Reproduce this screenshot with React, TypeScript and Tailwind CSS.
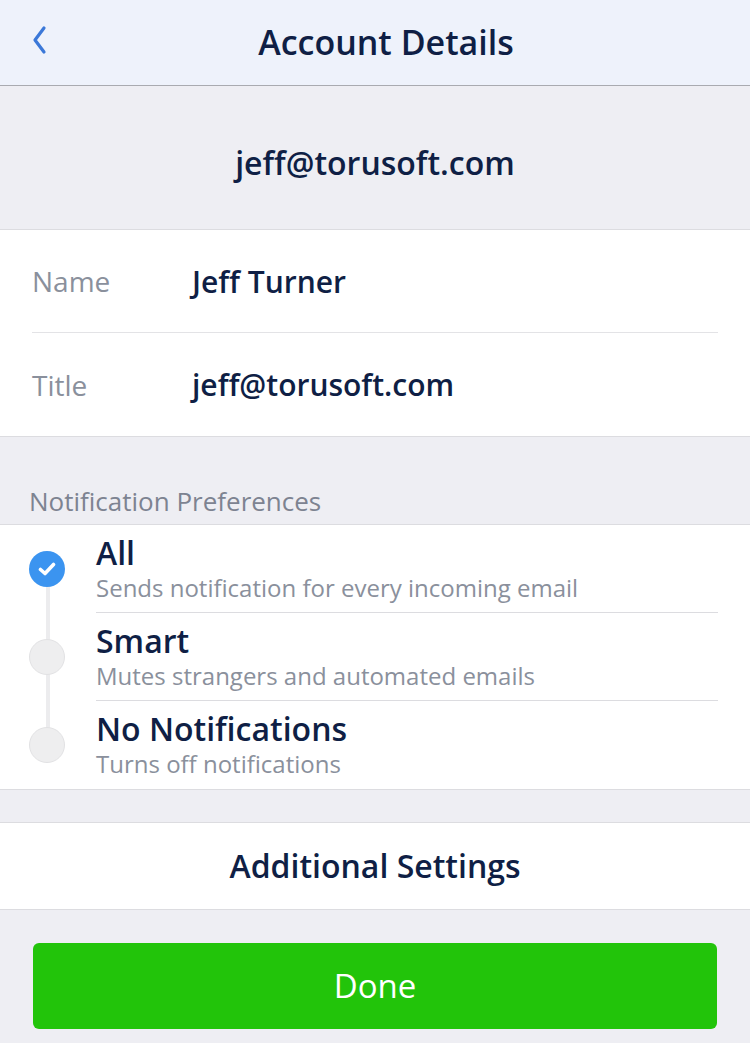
import React, { useState } from 'react';

type Pref = { id: string; title: string; desc: string };

const prefs: Pref[] = [
  { id: 'all', title: 'All', desc: 'Sends notification for every incoming email' },
  { id: 'smart', title: 'Smart', desc: 'Mutes strangers and automated emails' },
  { id: 'none', title: 'No Notifications', desc: 'Turns off notifications' },
];

const font = { fontFamily: '"Open Sans", "Noto Sans", sans-serif' };

export default function App() {
  const [selected, setSelected] = useState('all');

  return (
    <div className="w-[750px] h-[1043px] bg-[#eeeef3] text-[#0f1f45] overflow-hidden" style={font}>
      {/* Header */}
      <div className="relative h-[86px] bg-[#eef2fb] border-b border-[#a9aab0] flex items-center justify-center pl-[22px]">
        <button className="absolute left-[26px] top-[23px] text-[#3b78d8]">
          <svg width="28" height="34" viewBox="0 0 28 34" fill="none">
            <path d="M18 5 L9 17 L18 29" stroke="currentColor" strokeWidth="3.2" strokeLinecap="round" strokeLinejoin="round" />
          </svg>
        </button>
        <h1 className="text-[34px] font-semibold leading-none -mt-[2px]">Account Details</h1>
      </div>

      {/* Email */}
      <div className="h-[144px] flex items-center justify-center border-b border-[#dcdce0] pt-[10px]">
        <span className="text-[32px] font-semibold leading-none">jeff@torusoft.com</span>
      </div>

      {/* Name / Title */}
      <div className="bg-white border-b border-[#dcdce0]">
        <div className="h-[103px] mx-[32px] flex items-center border-b border-[#e3e3e6]">
          <span className="w-[160px] text-[28px] text-[#8a909c]">Name</span>
          <span className="text-[30px] font-semibold">Jeff Turner</span>
        </div>
        <div className="h-[103px] mx-[32px] flex items-center">
          <span className="w-[160px] text-[28px] text-[#8a909c]">Title</span>
          <span className="text-[30px] font-semibold">jeff@torusoft.com</span>
        </div>
      </div>

      {/* Notification Preferences */}
      <div className="h-[88px] flex items-end pl-[29px] pb-[3px] border-b border-[#dcdce0]">
        <span className="text-[26px] text-[#7d8391]">Notification Preferences</span>
      </div>

      <div className="bg-white border-b border-[#dcdce0]">
        {prefs.map((p, i) => {
          const active = selected === p.id;
          const last = i === prefs.length - 1;
          return (
            <div key={p.id} className="h-[88px] flex cursor-pointer" onClick={() => setSelected(p.id)}>
              <div className="relative w-[96px] shrink-0 flex items-center justify-center pr-[2px]">
                {i > 0 && <div className="absolute left-[46px] top-0 h-1/2 w-[4px] bg-[#ececee]" />}
                {!last && <div className="absolute left-[46px] top-1/2 h-1/2 w-[4px] bg-[#ececee]" />}
                <div
                  className={
                    active
                      ? 'relative w-[36px] h-[36px] rounded-full bg-[#3b94f0] flex items-center justify-center'
                      : 'relative w-[36px] h-[36px] rounded-full bg-[#eeeeef] border border-[#e2e2e4]'
                  }
                >
                  {active && (
                    <svg width="18" height="14" viewBox="0 0 18 14" fill="none">
                      <path d="M2.5 7.5 L7 11.5 L15.5 2.5" stroke="white" strokeWidth="3.6" strokeLinecap="round" strokeLinejoin="round" />
                    </svg>
                  )}
                </div>
              </div>
              <div className={last ? 'flex-1 mr-[32px] flex flex-col justify-center' : 'flex-1 mr-[32px] flex flex-col justify-center border-b border-[#dcdce0]'}>
                <span className="text-[32px] font-semibold leading-[38px]">{p.title}</span>
                <span className="text-[24px] text-[#8a909c] leading-[32px]">{p.desc}</span>
              </div>
            </div>
          );
        })}
      </div>

      {/* Additional Settings */}
      <div className="mt-[32px] h-[88px] bg-white border-y border-[#dcdce0] flex items-center justify-center">
        <span className="text-[32px] font-semibold">Additional Settings</span>
      </div>

      {/* Done */}
      <div className="px-[33px] pt-[33px]">
        <button className="w-full h-[86px] rounded-[6px] bg-[#22c40a] text-white text-[33px] font-medium">
          Done
        </button>
      </div>
    </div>
  );
}
